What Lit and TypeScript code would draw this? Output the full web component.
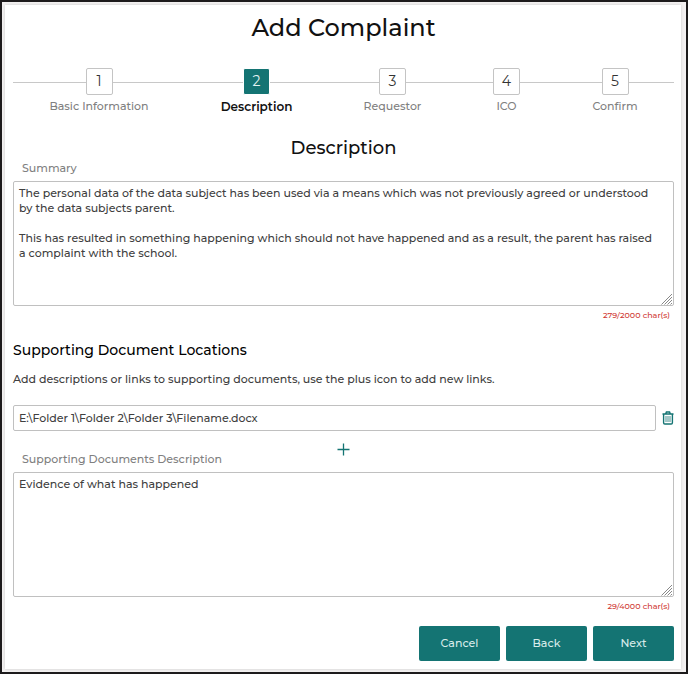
import { LitElement, html, css, svg } from "lit";
import { customElement, state } from "lit/decorators.js";
import { classMap } from "lit/directives/class-map.js";

const STEPS = ["Basic Information", "Description", "Requestor", "ICO", "Confirm"];

const SUMMARY =
  "The personal data of the data subject has been used via a means which was not previously agreed or understood by the data subjects parent.\n\n" +
  "This has resulted in something happening which should not have happened and as a result, the parent has raised a complaint with the school.";

@customElement("app-root")
export class AppRoot extends LitElement {
  @state() private current = 1;
  @state() private links = ["E:\\Folder 1\\Folder 2\\Folder 3\\Filename.docx"];

  static styles = css`
    :host {
      display: block;
      box-sizing: border-box;
      min-height: 100vh;
      padding: 3px 5px 3px 3px;
      border: 2px solid #1c1a1b;
      background: #f3f1f1;
      font-family: Montserrat, Inter, "Open Sans", sans-serif;
      font-size: 11px;
      font-weight: 500;
      line-height: 15px;
      color: #404040;
    }
    * {
      box-sizing: border-box;
    }
    .panel {
      display: flex;
      flex-direction: column;
      min-height: calc(100vh - 10px);
      padding: 8px 7px 8px 8px;
      background: #fff;
      box-shadow: 0 0 3px #ccc;
    }
    h1,
    h2,
    h3,
    p {
      margin: 0;
      font-weight: 500;
    }
    h1 {
      font-size: 24px;
      line-height: 30px;
      text-align: center;
      color: #111;
    }
    .steps {
      display: grid;
      grid-template-columns: 172fr 143fr 129fr 99fr 118fr;
      margin: 25px 0 0;
      padding: 0;
      list-style: none;
      background: linear-gradient(#c8c8c8, #c8c8c8) 0 14px / 100% 1px no-repeat;
    }
    .step {
      display: flex;
      flex-direction: column;
      align-items: center;
      gap: 4px;
      color: #808080;
      text-decoration: none;
    }
    .number {
      display: grid;
      place-items: center;
      width: 27px;
      height: 27px;
      border: 1px solid #c4c4c4;
      border-radius: 2px;
      background: #fff;
      font-size: 14px;
      font-weight: 400;
      color: #333;
    }
    .step.active {
      font-size: 12px;
      font-weight: 600;
      color: #111;
    }
    .active .number {
      border-color: #fff;
      background: #147473;
      font-weight: 400;
      color: #e4f3f2;
    }
    h2 {
      margin-top: 22px;
      font-size: 18px;
      line-height: 24px;
      text-align: center;
      color: #111;
    }
    .label {
      align-self: flex-start;
      margin-left: 9px;
      color: #808080;
    }
    .summary-label {
      margin: 1px 0 5px 9px;
    }
    .area {
      position: relative;
      display: grid;
    }
    textarea,
    input {
      display: block;
      width: 100%;
      min-width: 0;
      margin: 0;
      padding: 4px 5px;
      border: 1px solid #c0c0c0;
      border-radius: 2px;
      outline: none;
      background: #fff;
      font: inherit;
      color: #404040;
    }
    textarea {
      height: 125px;
      padding-right: 16px;
      resize: vertical;
    }
    textarea::-webkit-resizer {
      display: none;
    }
    .grip {
      position: absolute;
      right: 1px;
      bottom: 1px;
      pointer-events: none;
    }
    .count {
      margin: 3px 4px 0 0;
      font-size: 8px;
      line-height: 12px;
      text-align: right;
      color: #d03a34;
    }
    h3 {
      margin-top: 20px;
      font-size: 14px;
      line-height: 18px;
      color: #000;
    }
    .hint {
      margin-top: 13px;
    }
    .links {
      display: grid;
      gap: 8px;
      margin-top: 18px;
    }
    .link {
      display: flex;
      align-items: center;
      gap: 6px;
    }
    .link input {
      height: 26px;
    }
    .icon {
      display: block;
      padding: 0;
      border: 0;
      background: none;
      cursor: pointer;
    }
    .icon svg {
      display: block;
    }
    .add {
      align-self: center;
      margin-top: 12px;
    }
    .documents-label {
      margin: -4px 0 5px 9px;
    }
    .actions {
      display: flex;
      justify-content: flex-end;
      gap: 6px;
      margin-top: 14px;
    }
    .button {
      width: 81px;
      height: 35px;
      padding: 0;
      border: 0;
      border-radius: 2px;
      background: #147473;
      font: inherit;
      color: #d8ebea;
      cursor: pointer;
    }
  `;

  private grip() {
    return svg`<svg class="grip" width="12" height="12" viewBox="0 0 12 12" fill="none" stroke="#888" stroke-width="1" aria-hidden="true">
      <path d="M0.5 11.5 11 1M3.5 11.5 11 4M6.5 11.5 11 7M9.5 11.5 11 10" />
    </svg>`;
  }

  private updateLink(index: number, value: string) {
    this.links = this.links.map((link, i) => (i === index ? value : link));
  }

  render() {
    return html`
      <main class="panel">
        <h1>Add Complaint</h1>
        <ol class="steps">
          ${STEPS.map(
            (name, i) => html`<li>
              <a
                class=${classMap({ step: true, active: i === this.current })}
                href="#step-${i + 1}"
                aria-current=${i === this.current ? "step" : "false"}
                @click=${() => (this.current = i)}
              >
                <span class="number">${i + 1}</span><span>${name}</span>
              </a>
            </li>`
          )}
        </ol>
        <h2>Description</h2>
        <label class="label summary-label" for="summary">Summary</label>
        <div class="area">
          <textarea id="summary" maxlength="2000" spellcheck="false" .value=${SUMMARY}></textarea>
          ${this.grip()}
        </div>
        <p class="count">279/2000 char(s)</p>

        <h3>Supporting Document Locations</h3>
        <p class="hint">Add descriptions or links to supporting documents, use the plus icon to add new links.</p>
        <div class="links">
          ${this.links.map(
            (link, i) => html`<div class="link">
              <input
                type="text"
                aria-label="Document location"
                spellcheck="false"
                .value=${link}
                @input=${(e: Event) => this.updateLink(i, (e.target as HTMLInputElement).value)}
              />
              <button
                class="icon"
                type="button"
                aria-label="Remove link"
                @click=${() => (this.links = this.links.filter((_, n) => n !== i))}
              >
                <svg width="12" height="14" viewBox="0 0 12 14" fill="none" stroke="#147473">
                  <path d="M0.5 3H11.5M3.7 2.7 4.4 1H7.6L8.3 2.7" stroke-width="1.4" />
                  <path d="M1.6 3V11.8Q1.6 13 2.8 13H9.2Q10.4 13 10.4 11.8V3" stroke-width="1.4" />
                  <path d="M4 5V11M6 5V11M8 5V11" stroke-width="0.8" />
                </svg>
              </button>
            </div>`
          )}
        </div>
        <button
          class="icon add"
          type="button"
          aria-label="Add link"
          @click=${() => (this.links = [...this.links, ""])}
        >
          <svg width="13" height="13" viewBox="0 0 13 13" fill="none" stroke="#147473" stroke-width="1.3">
            <path d="M6.5 0.5V12.5M0.5 6.5H12.5" />
          </svg>
        </button>
        <label class="label documents-label" for="documents">Supporting Documents Description</label>
        <div class="area">
          <textarea id="documents" maxlength="4000" spellcheck="false" .value=${"Evidence of what has happened"}></textarea>
          ${this.grip()}
        </div>
        <p class="count">29/4000 char(s)</p>
        <div class="actions">
          ${["Cancel", "Back", "Next"].map((t) => html`<button class="button" type="button">${t}</button>`)}
        </div>
      </main>
    `;
  }
}
